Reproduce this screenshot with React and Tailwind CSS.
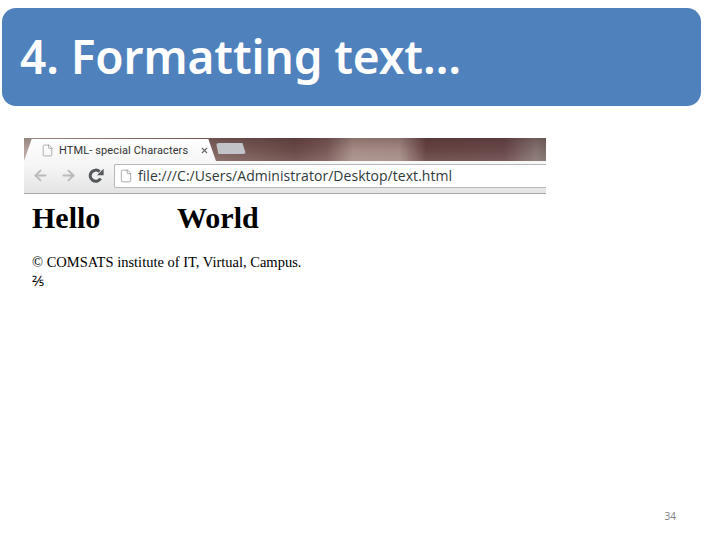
import { ArrowLeft, ArrowRight, File, X } from "lucide-react";

const ReloadIcon = () => (
  <svg width="16" height="16" viewBox="0 0 16 16" className="shrink-0">
    <path d="M12.6 10.6A5.6 5.6 0 1 1 11.6 3.6" fill="none" stroke="#54585a" strokeWidth="3" />
    <path d="M9 7.2L15.6 7.2L15.6 0.8Z" fill="#54585a" />
  </svg>
);

const BrowserShot = () => (
  <div className="w-[522px] font-['Open_Sans',sans-serif]">
    <div className="h-[23px] flex items-end bg-[linear-gradient(rgba(40,15,15,0.22)_0%,rgba(40,15,15,0)_55%,rgba(255,255,255,0.1)_100%),linear-gradient(90deg,#b5a59e_0%,#b5a59e_2%,#7a5c58_40%,#6a4a48_52%,#7a5a58_58%,#a68d87_63%,#a38a85_72%,#674444_77%,#694849_92%,#85736f_98%,#7a6a68_100%)]">
      <div className="w-[192px] h-[22px] bg-[linear-gradient(#ffffff,#f6f6f6)] [clip-path:polygon(0_100%,4%_0,96%_0,100%_100%)] flex items-center pl-[17px] gap-[5px]">
        <File size={13} strokeWidth={1.2} className="text-[#8a8a8a] shrink-0" />
        <span className="text-[11px] leading-none text-[#333] whitespace-nowrap tracking-[0.12px] font-['Roboto',sans-serif]">HTML- special Characters</span>
        <X size={9} strokeWidth={3} className="text-[#666] ml-[7px] shrink-0" />
      </div>
      <div className="w-[30px] h-[11px] mb-[7px] bg-[#c2c3c9] rounded-[3px] [clip-path:polygon(0_0,88%_0,100%_100%,8%_100%)]" />
    </div>
    <div className="h-[33px] border-b border-[#a8a8a8] bg-[linear-gradient(#f8f8f8,#e4e4e4)] flex items-start">
      <div className="flex items-center w-[90px] h-[27px] pt-[2px] pl-[8px] gap-[11px]">
        <ArrowLeft size={17} strokeWidth={2.6} className="text-[#b8babb]" />
        <ArrowRight size={17} strokeWidth={2.6} className="text-[#b8babb]" />
        <ReloadIcon />
      </div>
      <div className="flex-1 h-[24px] mt-[3px] bg-white border-y border-l border-[#b8b8b8] rounded-l-[2px] flex items-center pl-[4px] gap-[5px]">
        <File size={14} strokeWidth={1.2} className="text-[#8a8a8a] shrink-0" />
        <span className="text-[14px] leading-none text-[#2f3a3a] whitespace-nowrap tracking-[0.04px]">file:///C:/Users/Administrator/Desktop/text.html</span>
      </div>
    </div>
    <div className="pl-[8px] font-['Liberation_Serif',serif] text-black">
      <div className="flex mt-[9px] text-[30px] leading-[30px] font-bold">
        <span className="w-[145px]">Hello</span>
        <span>World</span>
      </div>
      <p className="mt-[19px] text-[14.5px] leading-[20px]">© COMSATS institute of IT, Virtual, Campus.</p>
      <p className="text-[14.5px] leading-[18px]">⅖</p>
    </div>
  </div>
);

export default function App() {
  return (
    <div className="w-[720px] h-[540px] bg-white overflow-hidden flex flex-col">
      <div className="mt-[8px] ml-[2px] w-[699px] h-[98px] bg-[#4f81bd] rounded-[14px] flex items-center pl-[18px] pb-[2px]">
        <h1 className="text-[46px] font-semibold text-white font-['Noto_Sans',sans-serif] leading-none tracking-[-0.1px]">4. Formatting text…</h1>
      </div>
      <div className="mt-[32px] ml-[24px]">
        <BrowserShot />
      </div>
      <div className="mt-auto mb-[19px] pr-[44px] text-right text-[10px] leading-none text-[#7f7f7f] font-['Open_Sans',sans-serif]">34</div>
    </div>
  );
}
